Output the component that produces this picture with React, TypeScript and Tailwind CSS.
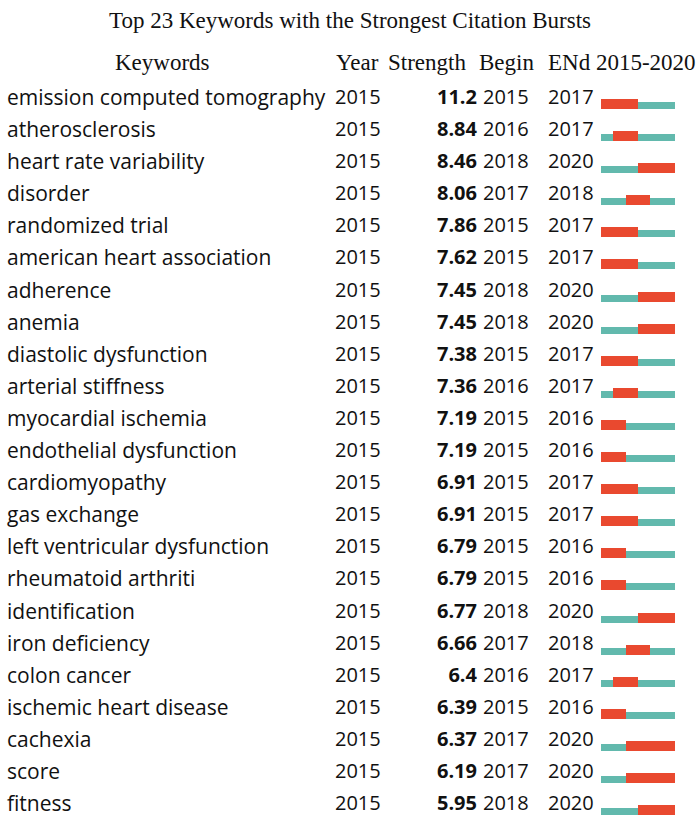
const rows: [string, string, number, number][] = [
  ['emission computed tomography', '11.2', 2015, 2017],
  ['atherosclerosis', '8.84', 2016, 2017],
  ['heart rate variability', '8.46', 2018, 2020],
  ['disorder', '8.06', 2017, 2018],
  ['randomized trial', '7.86', 2015, 2017],
  ['american heart association', '7.62', 2015, 2017],
  ['adherence', '7.45', 2018, 2020],
  ['anemia', '7.45', 2018, 2020],
  ['diastolic dysfunction', '7.38', 2015, 2017],
  ['arterial stiffness', '7.36', 2016, 2017],
  ['myocardial ischemia', '7.19', 2015, 2016],
  ['endothelial dysfunction', '7.19', 2015, 2016],
  ['cardiomyopathy', '6.91', 2015, 2017],
  ['gas exchange', '6.91', 2015, 2017],
  ['left ventricular dysfunction', '6.79', 2015, 2016],
  ['rheumatoid arthriti', '6.79', 2015, 2016],
  ['identification', '6.77', 2018, 2020],
  ['iron deficiency', '6.66', 2017, 2018],
  ['colon cancer', '6.4', 2016, 2017],
  ['ischemic heart disease', '6.39', 2015, 2016],
  ['cachexia', '6.37', 2017, 2020],
  ['score', '6.19', 2017, 2020],
  ['fitness', '5.95', 2018, 2020],
];

const YEAR_W = 74 / 6;

function BurstBar({ begin, end }: { begin: number; end: number }) {
  const left = (begin - 2015) * YEAR_W;
  const width = (end - begin + 1) * YEAR_W;
  return (
    <div className="relative w-[74px] h-[10px] mt-[18px]">
      <div className="absolute left-0 right-0 bottom-0 h-[7px] bg-[#62b9ad]" />
      <div
        className="absolute bottom-0 h-[10px] bg-[#e9492f]"
        style={{ left, width }}
      />
    </div>
  );
}

export default function App() {
  return (
    <div className="w-[700px] h-[826px] bg-white text-[#111]">
      {/* Title */}
      <div className="pt-[7px] text-center font-['Liberation_Serif',serif] text-[23px] leading-[28px]">
        Top 23 Keywords with the Strongest Citation Bursts
      </div>

      {/* Header */}
      <div className="flex items-center h-[36px] font-['Liberation_Serif',serif] text-[23px] mt-[10px]">
        <div className="w-[336px] pl-[115px]">Keywords</div>
        <div className="w-[52px]">Year</div>
        <div className="w-[91px]">Strength</div>
        <div className="w-[69px]">Begin</div>
        <div className="whitespace-nowrap">ENd 2015-2020</div>
      </div>

      {/* Rows */}
      <div className="flex flex-col">
        {rows.map(([kw, strength, begin, end]) => (
          <div key={kw} className="flex items-start h-[32.1px] font-['Open_Sans',sans-serif] text-[20px] leading-[32px]">
            <div className="w-[335px] pl-[7px] whitespace-nowrap text-[21px]">{kw}</div>
            <div className="w-[46px]">2015</div>
            <div className="w-[96px] text-right font-bold">{strength}</div>
            <div className="w-[71px] pl-[6px]">{begin}</div>
            <div className="w-[53px]">{end}</div>
            <BurstBar begin={begin} end={end} />
          </div>
        ))}
      </div>
    </div>
  );
}
